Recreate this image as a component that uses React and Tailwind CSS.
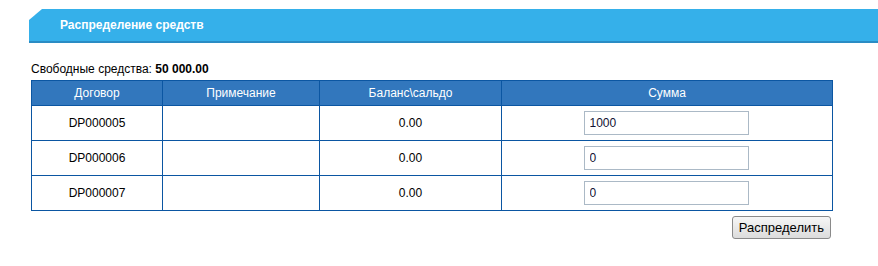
import React from "react";

const rows = [
  { id: "DP000005", note: "", balance: "0.00", sum: "1000" },
  { id: "DP000006", note: "", balance: "0.00", sum: "0" },
  { id: "DP000007", note: "", balance: "0.00", sum: "0" },
];

const App = () => {
  return (
    <div className="bg-white h-[266px] pt-[9px] font-['Liberation_Sans',Arial,sans-serif] text-[12px] text-black">
      <div className="ml-[29px] h-[34px] bg-[#35b0ea] border-b-2 border-[#2a8cc4] [clip-path:polygon(13px_0,100%_0,100%_100%,0_100%,0_11px)] flex items-center pl-[31px]">
        <span className="font-bold text-white text-[12px]">Распределение средств</span>
      </div>

      <div className="ml-[31px] w-[801px]">
        <p className="mt-[19px] leading-[14px]">
          Свободные средства: <b>50 000.00</b>
        </p>

        <table className="mt-[4px] w-[801px] border-collapse table-fixed">
          <colgroup>
            <col className="w-[131px]" />
            <col className="w-[157px]" />
            <col className="w-[182px]" />
            <col className="w-[331px]" />
          </colgroup>
          <thead>
            <tr className="bg-[#3277bd] text-white h-[25px]">
              <th className="border border-[#0b56a2] font-normal">Договор</th>
              <th className="border border-[#0b56a2] font-normal">Примечание</th>
              <th className="border border-[#0b56a2] font-normal">Баланс\сальдо</th>
              <th className="border border-[#0b56a2] font-normal">Сумма</th>
            </tr>
          </thead>
          <tbody>
            {rows.map((r) => (
              <tr key={r.id} className="h-[35px]">
                <td className="border border-[#0b56a2] text-center">{r.id}</td>
                <td className="border border-[#0b56a2]">{r.note}</td>
                <td className="border border-[#0b56a2] text-center">{r.balance}</td>
                <td className="border border-[#0b56a2] text-center">
                  <input
                    defaultValue={r.sum}
                    className="w-[165px] h-[24px] mr-[2px] border border-[#abb9c6] px-[5px] text-[12px] text-[#111133] outline-none align-middle"
                  />
                </td>
              </tr>
            ))}
          </tbody>
        </table>

        <div className="flex justify-end mt-[5px] pr-[1px]">
          <button className="h-[23px] px-[6px] rounded-[3px] border border-[#8a8a8a] bg-gradient-to-b from-[#f6f6f6] to-[#dcdcdc] text-[13px] leading-none text-black">
            Распределить
          </button>
        </div>
      </div>
    </div>
  );
};

export default App;
